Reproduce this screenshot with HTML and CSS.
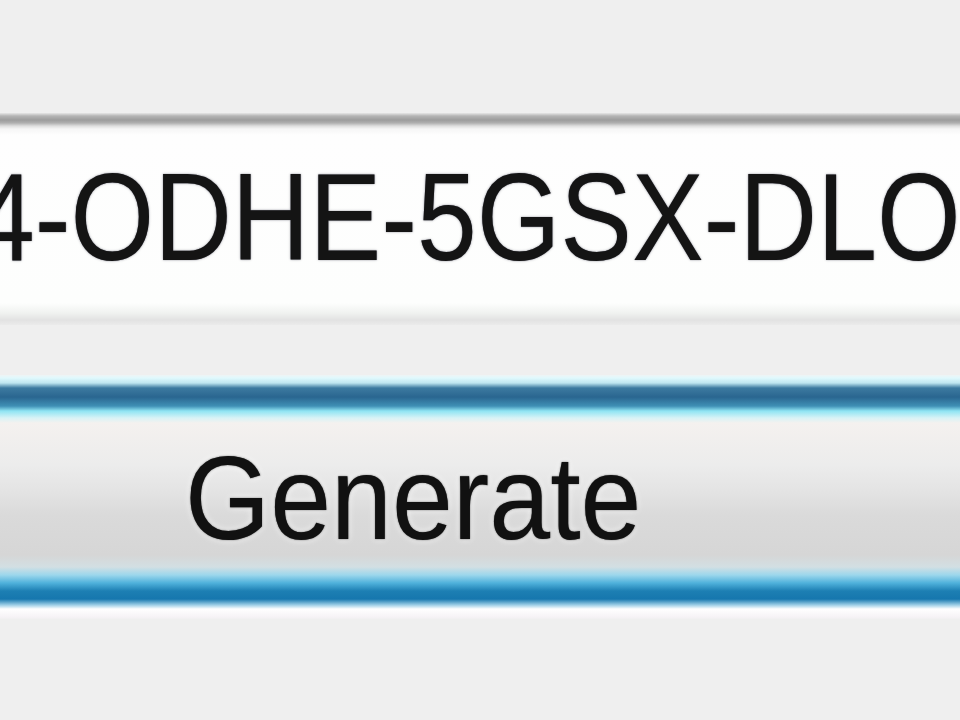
FILE: index.html
```html
<!DOCTYPE html>
<html lang="en">
<head>
<meta charset="utf-8">
<title>Key Generator</title>
<link rel="stylesheet" href="styles.css">
</head>
<body>
<main class="app">
  <div class="field" role="textbox" aria-readonly="true">
    <span class="key">4-ODHE-5GSX-DLO</span>
  </div>
  <button class="btn" type="button"><span class="btn-label">Generate</span></button>
</main>
</body>
</html>
```

FILE: styles.css
```css
html, body {
  margin: 0;
  padding: 0;
  background: #efefef;
  overflow: hidden;
}

.app {
  width: 960px;
  height: 720px;
  padding-top: 113px;
  box-sizing: border-box;
  overflow: hidden;
}

.field {
  margin: 0 -20px;
  height: 212px;
  box-sizing: border-box;
  padding-top: 41px;
  white-space: nowrap;
  overflow: hidden;
  background: linear-gradient(to bottom,
    #e6e6e6 0px,
    #b4b4b4 3px,
    #9c9c9c 7px,
    #b0b0b0 10px,
    #dedede 13px,
    #f6f6f6 16px,
    #fefefe 22px,
    #fdfefd 190px,
    #f0f2f0 200px,
    #e2e2e2 207px,
    #ebebeb 212px);
}

.key {
  display: inline-block;
  margin-left: -5px;
  font-family: "Liberation Sans", Arial, sans-serif;
  font-size: 125px;
  line-height: 125px;
  color: #141414;
  transform: scaleX(0.86);
  transform-origin: 0 0;
  text-shadow: 0 0 1px rgba(20, 20, 40, 0.6), 0 0 3px rgba(20, 20, 40, 0.3);
}

.btn {
  display: block;
  margin: 50px -20px 0;
  width: calc(100% + 40px);
  height: 245px;
  box-sizing: border-box;
  padding: 0 0 0 205px;
  border: none;
  text-align: left;
  white-space: nowrap;
  cursor: default;
  background: linear-gradient(to bottom,
    #eef4f5 0px,
    #e0f9fd 3px,
    #bfe6f0 8px,
    #3d7aa0 13px,
    #2a6690 22px,
    #3f8fb5 31px,
    #8fe4f3 36px,
    #d8f3f6 43px,
    #f4f1ef 48px,
    #ececec 90px,
    #e4e4e4 115px,
    #dadada 140px,
    #d6d6d6 180px,
    #d2dfe3 192px,
    #9cd7ec 200px,
    #4fb1db 208px,
    #1d7fb3 216px,
    #1677ae 224px,
    #9fcfe6 230px,
    #ffffff 234px,
    #f6f3f6 242px,
    #eeeeee 245px);
}

.btn-label {
  display: inline-block;
  vertical-align: top;
  font-family: "Liberation Sans", Arial, sans-serif;
  font-size: 119px;
  line-height: 119px;
  color: #111111;
  transform: scaleX(0.92);
  transform-origin: 0 0;
  text-shadow: 0 0 1px rgba(0, 0, 0, 0.6), 0 0 3px rgba(0, 0, 0, 0.3), 0 0 8px rgba(255, 255, 255, 0.9);
}
```
